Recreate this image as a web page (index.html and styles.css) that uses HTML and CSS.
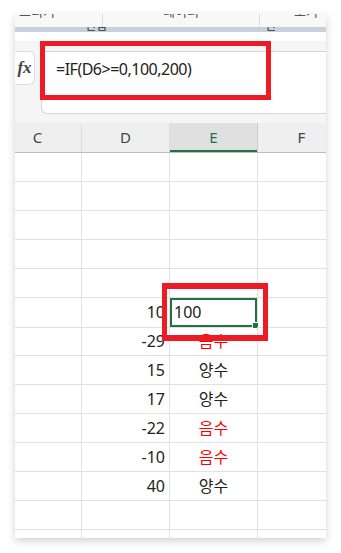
FILE: index.html
```html
<!DOCTYPE html>
<html lang="ko">
<head>
    <meta charset="UTF-8">
    <meta name="viewport" content="width=device-width, initial-scale=1.0">
    <title>IF 함수</title>
    <link rel="stylesheet" href="styles.css">
</head>
<body>
    <div class="window">
        <div class="ribbon-tabs">
            <div class="tab">그리기</div>
            <div class="tab">데이터</div>
            <div class="tab">보기</div>
        </div>
        <div class="ribbon-band">
            <span class="band-text left">편집</span>
            <span class="band-text right">편</span>
        </div>
        <div class="formula-bar">
            <div class="fx">fx</div>
            <div class="formula-input">=IF(D6&gt;=0,100,200)</div>
        </div>
        <div class="sheet">
            <div class="grid header">
                <div class="col-head">C</div>
                <div class="col-head">D</div>
                <div class="col-head active">E</div>
                <div class="col-head">F</div>
            </div>
            <div id="rows"></div>
        </div>
    </div>

    <div class="mark mark-formula"></div>
    <div class="mark mark-cell"></div>

    <script>
        const rowsDiv = document.getElementById('rows');
        const data = [
            null, null, null, null, null,
            {d: '10', e: '100', selected: true},
            {d: '-29', e: '음수', neg: true},
            {d: '15', e: '양수'},
            {d: '17', e: '양수'},
            {d: '-22', e: '음수', neg: true},
            {d: '-10', e: '음수', neg: true},
            {d: '40', e: '양수'},
            null, null
        ];

        data.forEach(item => {
            const row = document.createElement('div');
            row.className = 'grid row';
            const c = document.createElement('div');
            c.className = 'cell';
            const d = document.createElement('div');
            d.className = 'cell num';
            const e = document.createElement('div');
            e.className = 'cell text';
            const f = document.createElement('div');
            f.className = 'cell';
            if (item) {
                d.textContent = item.d;
                e.textContent = item.e;
                if (item.neg) e.classList.add('neg');
                if (item.selected) {
                    e.classList.add('selected');
                    const handle = document.createElement('span');
                    handle.className = 'fill-handle';
                    e.appendChild(handle);
                }
            }
            row.append(c, d, e, f);
            rowsDiv.appendChild(row);
        });
    </script>
</body>
</html>
```

FILE: styles.css
```css
body {
    margin: 0;
    background-color: #fff;
    font-family: "Noto Sans", "Noto Sans CJK KR", sans-serif;
    color: #222;
    position: relative;
    height: 553px;
    overflow: hidden;
}
.window {
    margin: 14px 0 0 15px;
    width: 311px;
    height: 524px;
    overflow: hidden;
    background-color: #fff;
    box-shadow: 0 3px 8px rgba(0, 0, 0, 0.18);
    display: flex;
    flex-direction: column;
}
.ribbon-tabs {
    height: 13px;
    flex: none;
    display: grid;
    grid-template-columns: 88px 157px 66px;
    background-color: #f8f8f8;
    overflow: hidden;
}
.tab {
    font-size: 13px;
    line-height: 13px;
    margin-top: -9px;
    text-align: center;
    color: #555;
    border-right: 1px solid #ddd;
}
.tab:first-child {
    text-align: left;
    padding-left: 4px;
}
.tab:last-child {
    border-right: none;
    text-align: right;
    padding-right: 8px;
}
.ribbon-band {
    height: 14px;
    flex: none;
    background: linear-gradient(#c7d0dd 0, #c7d0dd 5px, #fff 5px);
    position: relative;
    overflow: hidden;
}
.band-text {
    position: absolute;
    top: -7px;
    font-size: 12px;
    line-height: 12px;
    color: #333;
}
.band-text.left {
    left: 70px;
}
.band-text.right {
    left: 250px;
}
.formula-bar {
    height: 82px;
    flex: none;
    background-color: #f5f5f5;
    padding-top: 10px;
    box-sizing: border-box;
    display: flex;
    align-items: flex-start;
    gap: 6px;
}
.fx {
    width: 20px;
    height: 34px;
    flex: none;
    box-sizing: border-box;
    background-color: #fff;
    border: 1px solid #ddd;
    border-left: none;
    border-radius: 0 6px 6px 0;
    font-family: "Liberation Serif", serif;
    font-style: italic;
    font-weight: bold;
    font-size: 17px;
    line-height: 31px;
    color: #444;
    text-align: center;
}
.formula-input {
    flex: 1;
    height: 63px;
    box-sizing: border-box;
    background-color: #fff;
    border: 1px solid #d6d6d6;
    border-right: none;
    border-radius: 0 0 0 6px;
    padding: 5px 0 0 14px;
    font-size: 16px;
    letter-spacing: -0.5px;
    line-height: 24px;
    color: #222;
}
.sheet {
    flex: 1;
    overflow: hidden;
}
.grid {
    display: grid;
    grid-template-columns: 88px 88px 88px 88px;
    margin-left: -21px;
}
.header {
    height: 29px;
    background-color: #efefef;
    border-bottom: 1px solid #bdbdbd;
}
.col-head {
    font-size: 15px;
    line-height: 29px;
    text-align: center;
    color: #444;
    border-right: 1px solid #dcdcdc;
}
.col-head.active {
    background-color: #e0e0e0;
    color: #217346;
    box-shadow: inset 0 -2px 0 #217346;
    border-right-color: #c9c9c9;
}
.row {
    height: 29px;
}
.cell {
    border-right: 1px solid #e1e1e1;
    border-bottom: 1px solid #e1e1e1;
    font-size: 16px;
    line-height: 28px;
    position: relative;
}
.cell.num {
    text-align: right;
    padding-right: 4px;
}
.cell.text {
    text-align: center;
}
.cell.neg {
    color: #f00;
}
.cell.selected {
    text-align: left;
    padding-left: 4px;
    box-shadow: inset 0 0 0 2px #217346;
    line-height: 29px;
}
.fill-handle {
    position: absolute;
    right: -2px;
    bottom: -2px;
    width: 5px;
    height: 5px;
    background-color: #217346;
    border: 1px solid #fff;
}
.mark {
    position: absolute;
    border: 5px solid #ed1c24;
    box-sizing: border-box;
}
.mark-formula {
    left: 40px;
    top: 41px;
    width: 231px;
    height: 59px;
}
.mark-cell {
    left: 162px;
    top: 283px;
    width: 106px;
    height: 58px;
    border-width: 6px 5px;
}
```
